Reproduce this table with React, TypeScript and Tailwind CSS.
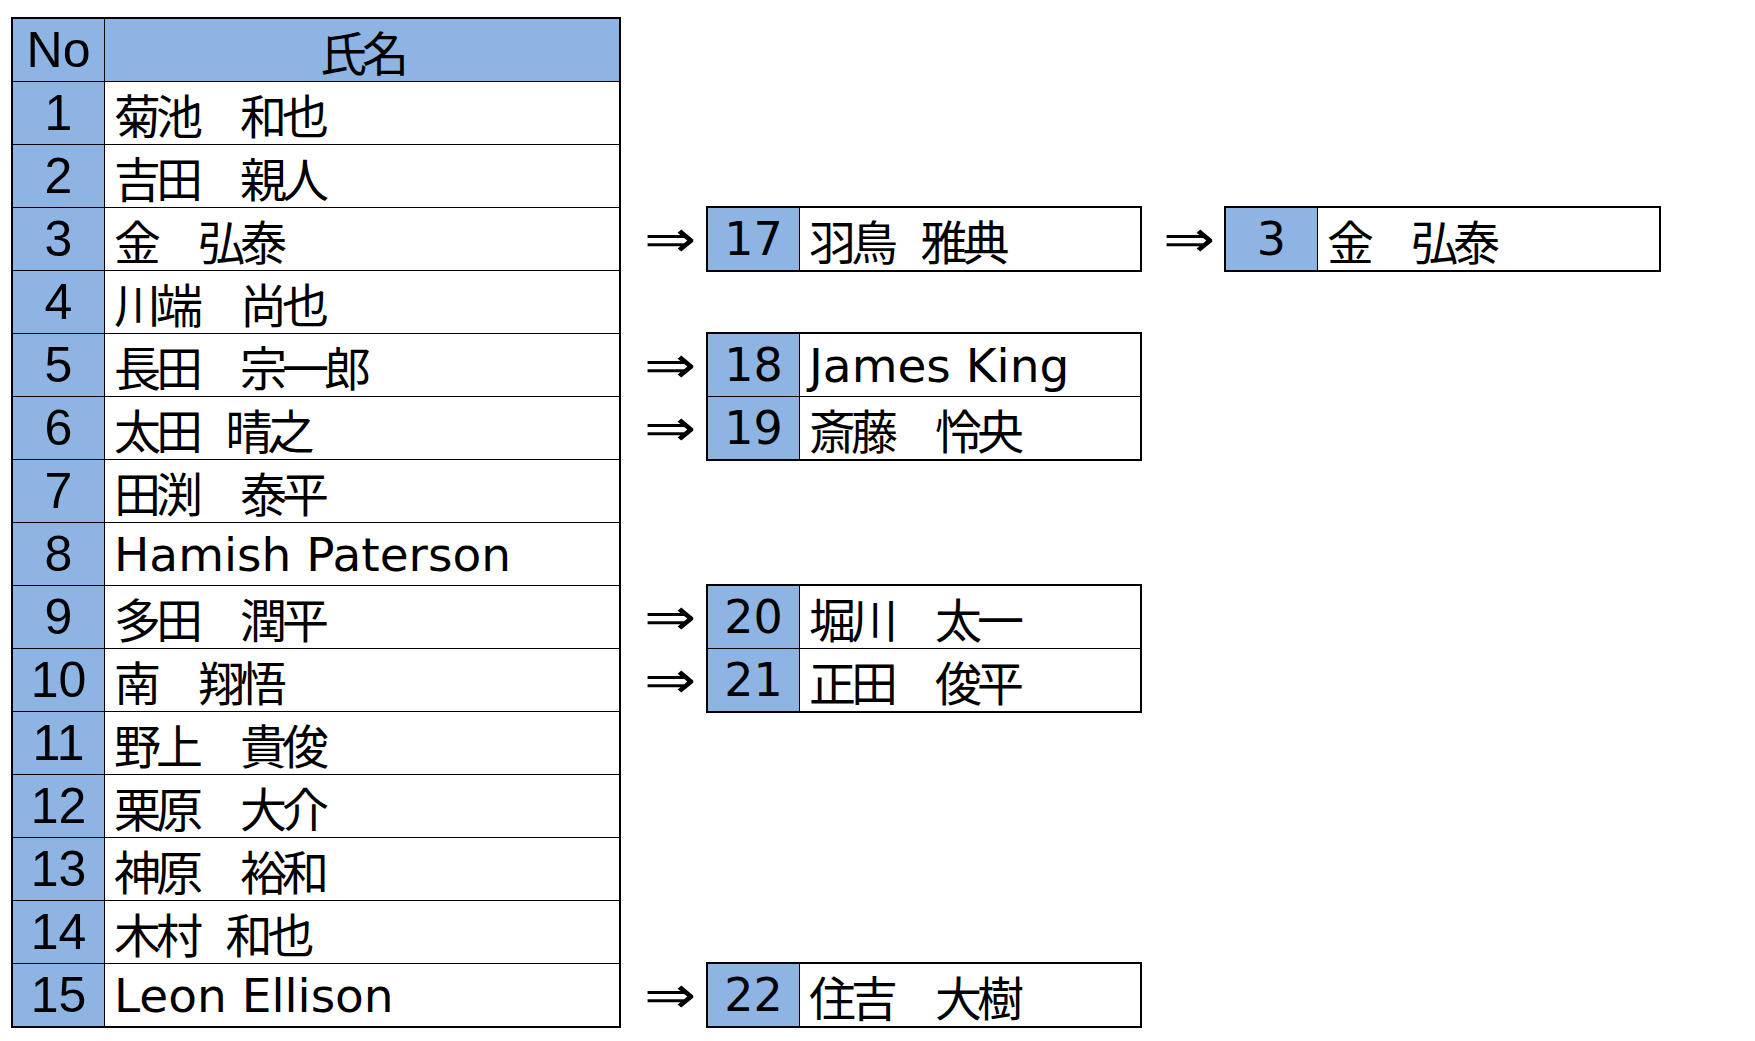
type Person = { no: number; name: string }

const members: Person[] = [
  { no: 1, name: "菊池　和也" },
  { no: 2, name: "吉田　親人" },
  { no: 3, name: "金　弘泰" },
  { no: 4, name: "川端　尚也" },
  { no: 5, name: "長田　宗一郎" },
  { no: 6, name: "太田 晴之" },
  { no: 7, name: "田渕　泰平" },
  { no: 8, name: "Hamish Paterson" },
  { no: 9, name: "多田　潤平" },
  { no: 10, name: "南　翔悟" },
  { no: 11, name: "野上　貴俊" },
  { no: 12, name: "栗原　大介" },
  { no: 13, name: "神原　裕和" },
  { no: 14, name: "木村 和也" },
  { no: 15, name: "Leon Ellison" },
]

const latin = (s: string) => /^[A-Za-z ]+$/.test(s)

function NameText({ name }: { name: string }) {
  if (latin(name)) {
    return (
      <span className="font-['DejaVu_Sans','Noto_Sans_CJK_JP',sans-serif] text-[47px] leading-none">
        {name}
      </span>
    )
  }
  return (
    <span className="font-['Noto_Sans_CJK_JP',sans-serif] text-[47px] leading-none tracking-[-5px] [word-spacing:22px]">
      {name}
    </span>
  )
}

function Box({ items, width, className }: { items: Person[]; width: string; className: string }) {
  return (
    <div className={`-mt-px self-start border-2 border-black bg-white ${width} ${className}`}>
      {items.map((p, i) => (
        <div key={p.no} className={`flex h-[62px] box-content ${i > 0 ? "border-t border-black" : ""}`}>
          <div className="flex w-[92px] shrink-0 items-center justify-center border-r border-black bg-[#8db4e2] font-['DejaVu_Sans',sans-serif] text-[46px] leading-none">
            {p.no}
          </div>
          <div className="flex flex-1 items-center pl-[9px]">
            <NameText name={p.name} />
          </div>
        </div>
      ))}
    </div>
  )
}

function Arrow({ className }: { className: string }) {
  return (
    <div className={`flex items-center ${className}`}>
      <span className="inline-block origin-left scale-x-[1.2] font-['DejaVu_Sans',sans-serif] text-[52px] leading-none">
        ⇒
      </span>
    </div>
  )
}

export default function App() {
  return (
    <div className="flex min-h-screen items-start bg-white pl-[11px] pt-[17px] text-black">
      {/* main list */}
      <div className="w-[610px] border-2 border-black">
        <div className="flex h-[62px] bg-[#8db4e2]">
          <div className="flex w-[92px] shrink-0 items-center justify-center border-r border-black font-['Liberation_Sans',sans-serif] text-[50px] leading-none">
            No
          </div>
          <div className="flex flex-1 items-center justify-center font-['Noto_Sans_CJK_JP',sans-serif] text-[47px] leading-none tracking-[-5px]">
            氏名
          </div>
        </div>
        {members.map((p) => (
          <div key={p.no} className="flex h-[63px] border-t border-black">
            <div className="flex w-[92px] shrink-0 items-center justify-center border-r border-black bg-[#8db4e2] font-['Liberation_Sans',sans-serif] text-[50px] leading-none">
              {p.no}
            </div>
            <div className="flex flex-1 items-center pl-[9px]">
              <NameText name={p.name} />
            </div>
          </div>
        ))}
      </div>

      {/* replacements */}
      <div className="mt-px grid grid-cols-[85px_436px_82px_437px] grid-rows-[repeat(16,63px)]">
        <Arrow className="col-start-1 row-start-4 pl-[23px]" />
        <Box items={[{ no: 17, name: "羽鳥 雅典" }]} width="w-[436px]" className="col-start-2 row-start-4" />
        <Arrow className="col-start-3 row-start-4 pl-[21px]" />
        <Box items={[{ no: 3, name: "金　弘泰" }]} width="w-[437px]" className="col-start-4 row-start-4" />

        <Arrow className="col-start-1 row-start-6 pl-[23px]" />
        <Arrow className="col-start-1 row-start-7 pl-[23px]" />
        <Box
          items={[
            { no: 18, name: "James King" },
            { no: 19, name: "斎藤　怜央" },
          ]}
          width="w-[436px]"
          className="col-start-2 row-start-6 row-span-2"
        />

        <Arrow className="col-start-1 row-start-10 pl-[23px]" />
        <Arrow className="col-start-1 row-start-11 pl-[23px]" />
        <Box
          items={[
            { no: 20, name: "堀川　太一" },
            { no: 21, name: "正田　俊平" },
          ]}
          width="w-[436px]"
          className="col-start-2 row-start-10 row-span-2"
        />

        <Arrow className="col-start-1 row-start-16 pl-[23px]" />
        <Box items={[{ no: 22, name: "住吉　大樹" }]} width="w-[436px]" className="col-start-2 row-start-16" />
      </div>
    </div>
  )
}
